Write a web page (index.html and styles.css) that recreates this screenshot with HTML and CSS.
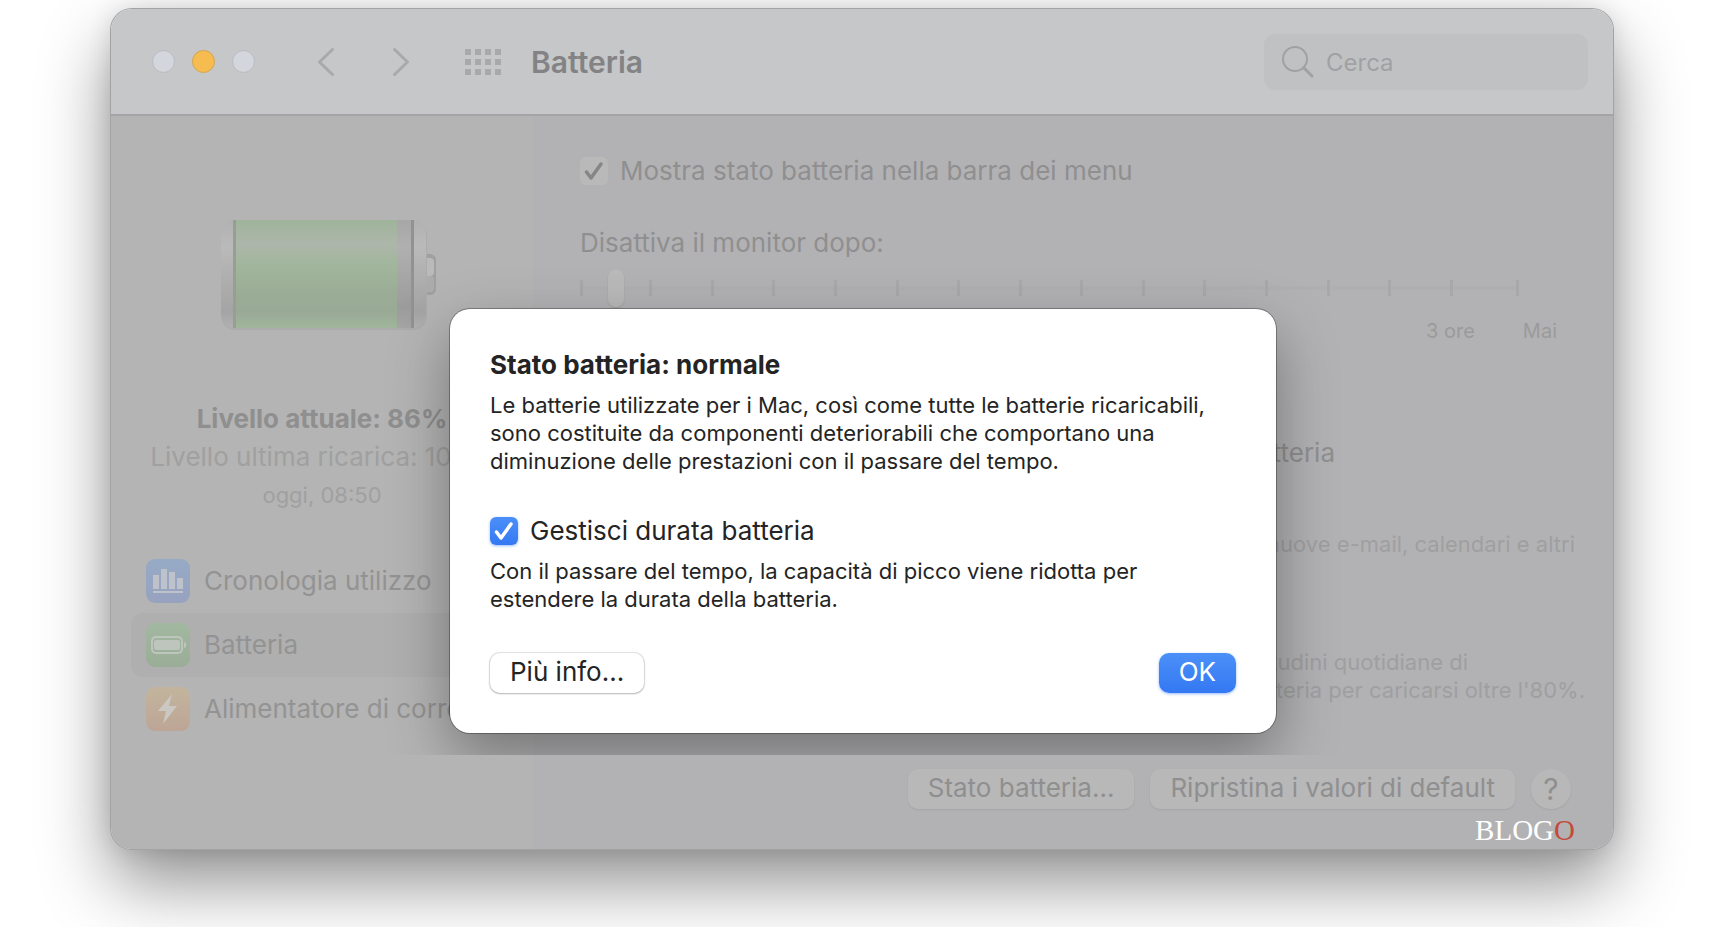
FILE: index.html
```html
<!DOCTYPE html>
<html lang="it">
<head>
    <meta charset="UTF-8">
    <meta name="viewport" content="width=device-width, initial-scale=1.0">
    <title>Batteria</title>
    <link rel="stylesheet" href="styles.css">
</head>
<body>

    <div class="window">
        <!-- Toolbar -->
        <header class="toolbar">
            <div class="lights">
                <span class="light"></span>
                <span class="light light-yellow"></span>
                <span class="light"></span>
            </div>
            <div class="arrows">
                <button class="icon-btn" aria-label="Indietro">
                    <svg width="18" height="30" viewBox="0 0 18 30"><path d="M15.500 2.500L2.500 15l13 12.500"/></svg>
                </button>
                <button class="icon-btn" aria-label="Avanti">
                    <svg width="18" height="30" viewBox="0 0 18 30"><path d="M2.500 2.500l13 12.500-13 12.500"/></svg>
                </button>
            </div>
            <button class="icon-btn grid-btn" aria-label="Mostra tutte">
                <svg width="36" height="26" viewBox="0 0 36 26">
                    <path d="M3 0v26M13 0v26M23 0v26M33 0v26" stroke-width="6" stroke-dasharray="6 4" stroke-linecap="butt"/>
                </svg>
            </button>
            <h1>Batteria</h1>
            <label class="search">
                <svg width="32" height="32" viewBox="0 0 32 32"><circle cx="13" cy="13" r="12"/><path d="M22 22l8 8" stroke-width="3"/></svg>
                <input type="text" placeholder="Cerca" aria-label="Cerca">
            </label>
        </header>

        <div class="content">
            <!-- Sidebar -->
            <aside class="sidebar">
                <svg class="battery" width="220" height="116" viewBox="0 0 220 116">
                    <defs>
                        <linearGradient id="shell" x1="0" y1="0" x2="0" y2="1">
                            <stop offset="0" stop-color="#b1b1b1"/>
                            <stop offset=".25" stop-color="#bababb"/>
                            <stop offset=".5" stop-color="#b0b0b1"/>
                            <stop offset=".85" stop-color="#a4a4a5"/>
                            <stop offset="1" stop-color="#b1b1b1"/>
                        </linearGradient>
                        <linearGradient id="charge" x1="0" y1="0" x2="0" y2="1">
                            <stop offset="0" stop-color="#9fb49b"/>
                            <stop offset=".22" stop-color="#adb6aa"/>
                            <stop offset=".42" stop-color="#a1b69c"/>
                            <stop offset=".65" stop-color="#9bad96"/>
                            <stop offset=".85" stop-color="#99a995"/>
                            <stop offset="1" stop-color="#a0b69c"/>
                        </linearGradient>
                        <linearGradient id="empty" x1="0" y1="0" x2="0" y2="1">
                            <stop offset="0" stop-color="#a7a7a8"/>
                            <stop offset=".25" stop-color="#b0b0b1"/>
                            <stop offset=".8" stop-color="#9c9c9c"/>
                            <stop offset="1" stop-color="#a5a5a6"/>
                        </linearGradient>
                    </defs>
                    <rect x="200" y="34" width="15" height="41" rx="6" fill="#a0a0a1"/>
                    <rect x="202" y="38" width="11" height="18" rx="4" fill="#bababb"/>
                    <rect x="202" y="56" width="11" height="16" rx="4" fill="#acacad"/>
                    <rect x="0" y="1" width="206" height="109" rx="14" fill="#acacae"/>
                    <rect x="0" y="0" width="205" height="108" rx="14" fill="url(#shell)"/>
                    <rect x="12" y="0" width="164" height="108" fill="url(#charge)"/>
                    <rect x="12" y="0" width="3" height="108" fill="#95a092"/>
                    <rect x="176" y="0" width="15" height="108" fill="url(#empty)"/>
                    <rect x="190" y="0" width="3" height="108" fill="#929293"/>
                </svg>
                <div class="levels">
                    <p class="level-now">Livello attuale: 86%</p>
                    <p class="level-last">Livello ultima ricarica: 100%</p>
                    <p class="level-time">oggi, 08:50</p>
                </div>
                <nav class="menu">
                    <a href="#cronologia">
                        <svg width="44" height="44" viewBox="0 0 44 44">
                            <defs><linearGradient id="blue" x1="0" y1="0" x2="0" y2="1"><stop offset="0" stop-color="#96aac6"/><stop offset="1" stop-color="#97a2bf"/></linearGradient></defs>
                            <rect width="44" height="44" rx="9" fill="url(#blue)"/>
                            <path d="M7 16h6v14H7zM15 10h6v20h-6zM23 13h6v17h-6zM31 19h6v11h-6zM7 32h30v2H7z" fill="#bec2ca"/>
                        </svg>
                        Cronologia utilizzo
                    </a>
                    <a href="#batteria" class="selected">
                        <svg width="44" height="44" viewBox="0 0 44 44">
                            <defs><linearGradient id="green" x1="0" y1="0" x2="0" y2="1"><stop offset="0" stop-color="#a3b8a0"/><stop offset="1" stop-color="#99ad97"/></linearGradient></defs>
                            <rect width="44" height="44" rx="9" fill="url(#green)"/>
                            <rect x="6" y="14" width="30" height="16" rx="4" fill="none" stroke="#bdc5bd" stroke-width="2"/>
                            <rect x="8" y="17" width="26" height="10" rx="2" fill="#bdc5bd"/>
                            <path d="M38 19c3 0 3 6 0 6z" fill="#bdc5bd"/>
                        </svg>
                        Batteria
                    </a>
                    <a href="#alimentatore">
                        <svg width="44" height="44" viewBox="0 0 44 44">
                            <defs><linearGradient id="orange" x1="0" y1="0" x2="0" y2="1"><stop offset="0" stop-color="#c2b59c"/><stop offset="1" stop-color="#bda596"/></linearGradient></defs>
                            <rect width="44" height="44" rx="9" fill="url(#orange)"/>
                            <path d="M26 7L12 24h8l-3 13 14-18h-8z" fill="#cbc7c2"/>
                        </svg>
                        Alimentatore di corrente
                    </a>
                </nav>
            </aside>

            <!-- Battery options -->
            <main class="options">
                <label class="check">
                    <input type="checkbox" class="check-box" checked>
                    Mostra stato batteria nella barra dei menu
                </label>
                <label class="slider-label" for="monitor">Disattiva il monitor dopo:</label>
                <div class="slider">
                    <div class="ticks">
                        <i></i><i></i><i></i><i></i><i></i><i></i><i></i><i></i>
                        <i></i><i></i><i></i><i></i><i></i><i></i><i></i>
                    </div>
                    <input type="range" id="monitor" min="0" max="100" value="3">
                </div>
                <div class="slider-values"><span>3 ore</span><span>Mai</span></div>
                <div class="hints">
                    <p class="hint-title">a batteria</p>
                    <p class="hint hint-mail">nuove e-mail, calendari e altri</p>
                    <p class="hint hint-habits">abitudini quotidiane di</p>
                    <p class="hint">batteria per caricarsi oltre l'80%.</p>
                </div>
            </main>
        </div>

        <!-- Bottom bar -->
        <footer class="bottom">
            <div class="bottom-side"></div>
            <div class="bottom-main">
                <div class="bottom-actions">
                    <button class="btn btn-dim">Stato batteria...</button>
                    <button class="btn btn-dim">Ripristina i valori di default</button>
                    <button class="btn btn-dim btn-help" aria-label="Aiuto">?</button>
                </div>
                <div class="brand">BLOG<span>O</span></div>
            </div>
        </footer>

        <!-- Battery health dialog -->
        <div class="overlay">
            <section class="dialog" role="dialog" aria-labelledby="dialog-title">
                <h2 id="dialog-title">Stato batteria: normale</h2>
                <p>Le batterie utilizzate per i Mac, così come tutte le batterie ricaricabili,<br>sono costituite da componenti deteriorabili che comportano una<br>diminuzione delle prestazioni con il passare del tempo.</p>
                <label class="check dialog-check">
                    <input type="checkbox" class="check-box check-blue" checked>
                    Gestisci durata batteria
                </label>
                <p>Con il passare del tempo, la capacità di picco viene ridotta per<br>estendere la durata della batteria.</p>
                <div class="dialog-actions">
                    <button class="btn">Più info...</button>
                    <button class="btn btn-ok">OK</button>
                </div>
            </section>
        </div>
    </div>

</body>
</html>
```
FILE: styles.css
```css
* {
    box-sizing: border-box;
}
body {
    margin: 0;
    padding: 9px 111px 78px;
    background-color: white;
    font-family: Inter, "Liberation Sans", sans-serif;
    font-size: 26px;
    line-height: 32px;
    color: #8f8f90;
    overflow-x: hidden;
}
h1, h2, p {
    margin: 0;
}
button, input {
    font: inherit;
    color: inherit;
}
.window {
    position: relative;
    border-radius: 21px;
    box-shadow: 0 0 0 1px #a3a3a5, 0 34px 70px rgba(0, 0, 0, 0.44), 0 0 24px rgba(0, 0, 0, 0.12);
}
/* Toolbar */
.toolbar {
    display: flex;
    align-items: center;
    height: 107px;
    padding: 0 25px 0 41px;
    background-color: #c6c7c9;
    border-bottom: 2px solid #a4a4a6;
    border-radius: 21px 21px 0 0;
}
.lights {
    display: flex;
    gap: 17px;
}
.light {
    width: 23px;
    height: 23px;
    border-radius: 50%;
    background-color: #d3d6dc;
    border: 1px solid #b9bbc0;
}
.light-yellow {
    background-color: #f6bc4f;
    border-color: #d3a551;
}
.arrows {
    display: flex;
    gap: 57px;
    margin-left: 62px;
}
.icon-btn {
    display: flex;
    padding: 0;
    border: none;
    background: none;
}
.icon-btn svg, .search svg {
    fill: none;
    stroke: #a8a9ab;
    stroke-width: 3;
    stroke-linecap: round;
    stroke-linejoin: round;
}
.grid-btn {
    margin-left: 55px;
}
h1 {
    margin-left: 30px;
    font-size: 30px;
    font-weight: 600;
    color: #838385;
}
.search {
    display: flex;
    align-items: center;
    gap: 12px;
    width: 324px;
    height: 56px;
    margin-left: auto;
    padding: 0 18px;
    background-color: #c0c1c3;
    border-radius: 11px;
}
.search svg {
    flex: none;
    stroke: #a0a1a3;
    stroke-width: 2;
}
.search input {
    width: 100%;
    padding: 2px 0 0;
    border: none;
    outline: none;
    background: none;
    font-size: 24px;
}
.search input::placeholder {
    color: #a0a1a3;
}
/* Columns */
.content {
    display: flex;
}
.sidebar {
    width: 422px;
    padding: 104px 20px 14px;
    background-color: #b4b4b4;
}
.battery {
    display: block;
    margin-left: 90px;
}
.levels {
    padding-top: 67px;
    text-align: center;
    white-space: nowrap;
}
.levels p {
    margin-bottom: 6px;
}
.level-now {
    font-weight: 700;
}
.level-last, .level-time {
    color: #a0a0a0;
}
.level-time {
    font-size: 22px;
}
.menu {
    padding-top: 32px;
}
.menu a {
    display: flex;
    align-items: center;
    gap: 14px;
    height: 64px;
    padding: 0 15px;
    border-radius: 12px;
    color: #939393;
    text-decoration: none;
    white-space: nowrap;
}
.menu a svg {
    flex: none;
}
.menu .selected {
    background-color: #afafaf;
}
.options {
    flex: 1;
    padding: 39px 28px 0 47px;
    background-color: #b2b2b4;
}
/* Check boxes */
.check {
    display: flex;
    align-items: center;
    gap: 12px;
}
.check-box {
    appearance: none;
    width: 28px;
    height: 28px;
    margin: 0;
    border-radius: 6px;
    background: #b9b9b9 url("data:image/svg+xml,%3Csvg xmlns='http://www.w3.org/2000/svg' viewBox='0 0 28 28'%3E%3Cpath d='M6.500 15l4.500 6L21 7' fill='none' stroke='%23868687' stroke-width='3.500' stroke-linecap='round' stroke-linejoin='round'/%3E%3C/svg%3E");
}
.check-blue {
    background: url("data:image/svg+xml,%3Csvg xmlns='http://www.w3.org/2000/svg' viewBox='0 0 28 28'%3E%3Cpath d='M6.500 15l4.500 6L21 7' fill='none' stroke='white' stroke-width='3.500' stroke-linecap='round' stroke-linejoin='round'/%3E%3C/svg%3E"), linear-gradient(#4b90f7, #3478f3);
    box-shadow: 0 1px 3px rgba(52, 120, 243, 0.5);
}
/* Slider */
.slider-label {
    display: block;
    margin-top: 40px;
}
.slider {
    position: relative;
    height: 40px;
    margin: 9px 66px 0 0;
}
.ticks {
    display: grid;
    grid-template-columns: 9fr repeat(13, 8fr) 9fr;
    align-items: center;
    height: 40px;
    background: linear-gradient(#afafb0, #afafb0) center / 100% 4px no-repeat;
}
.ticks i {
    height: 16px;
    border-left: 3px solid #a8a8a9;
}
.ticks i:last-child {
    border-right: 3px solid #a8a8a9;
}
.slider input {
    position: absolute;
    inset: 0;
    appearance: none;
    width: 100%;
    margin: 0;
    background: none;
}
.slider input::-webkit-slider-thumb {
    appearance: none;
    width: 16px;
    height: 38px;
    border-radius: 8px;
    background-color: #b9b9b9;
    box-shadow: 0 1px 2px rgba(0, 0, 0, 0.1);
}
.slider-values {
    display: flex;
    justify-content: flex-end;
    gap: 48px;
    margin-top: 7px;
    padding-right: 28px;
    font-size: 20px;
    color: #9a9a9b;
}
/* Option texts */
.hints {
    padding-top: 90px;
    text-align: right;
    white-space: nowrap;
}
.hint-title {
    padding-right: 250px;
}
.hint {
    font-size: 22px;
    line-height: 28px;
    color: #9f9fa0;
}
.hint-mail {
    padding: 61px 10px 90px 0;
}
.hint-habits {
    padding-right: 117px;
}
/* Bottom bar */
.bottom {
    position: relative;
    z-index: 2;
    display: flex;
    height: 94px;
}
.bottom-side {
    width: 422px;
    background-color: #b4b4b4;
    border-radius: 0 0 0 21px;
}
.bottom-main {
    flex: 1;
    padding: 14px 38px 0;
    background-color: #b2b2b4;
    border-radius: 0 0 21px 0;
}
.bottom-actions {
    display: flex;
    justify-content: flex-end;
    gap: 16px;
    padding-right: 4px;
}
.btn {
    height: 40px;
    padding: 0 20px 2px;
    border: none;
    border-radius: 10px;
    background-color: white;
    box-shadow: 0 0 1px 1px rgba(0, 0, 0, 0.12), 0 1px 2px rgba(0, 0, 0, 0.2);
    white-space: nowrap;
}
.btn-dim {
    background-color: #b8b8b8;
    box-shadow: 0 1px 2px rgba(0, 0, 0, 0.08);
}
.btn-help {
    width: 40px;
    padding: 0;
    border-radius: 50%;
    font-size: 30px;
}
.brand {
    margin-top: 5px;
    font-family: "Liberation Serif", serif;
    font-size: 29px;
    text-align: right;
    color: white;
}
.brand span {
    color: #c44a3a;
}
/* Dialog */
.overlay {
    position: absolute;
    inset: 0;
    z-index: 1;
    display: flex;
    justify-content: center;
    align-items: flex-start;
    padding: 300px 0 0 2px;
}
.dialog {
    width: 55%;
    min-width: 826px;
    padding: 40px;
    border-radius: 20px;
    background-color: white;
    color: #242424;
    box-shadow: 0 0 0 1px rgba(0, 0, 0, 0.3), 0 24px 60px rgba(0, 0, 0, 0.35);
}
h2 {
    font-size: 26px;
    line-height: 32px;
    font-weight: 700;
}
.dialog p {
    margin-top: 10px;
    font-size: 22px;
    line-height: 28px;
}
.dialog-check {
    margin-top: 40px;
}
.dialog-actions {
    display: flex;
    justify-content: space-between;
    margin-top: 40px;
}
.btn-ok {
    background: linear-gradient(#4b90f7, #3478f3);
    box-shadow: 0 1px 3px rgba(52, 120, 243, 0.5);
    color: white;
}
```
